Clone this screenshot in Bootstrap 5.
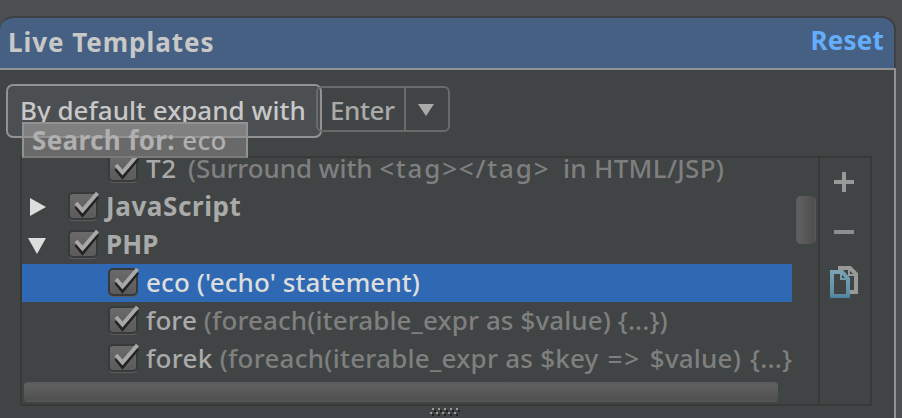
<!DOCTYPE html>
<html lang="en" data-bs-theme="dark">
<head>
<meta charset="utf-8">
<meta name="viewport" content="width=device-width, initial-scale=1">
<title>Live Templates</title>
<link href="https://cdn.jsdelivr.net/npm/bootstrap@5.3.0/dist/css/bootstrap.min.css" rel="stylesheet">
<style>
body{width:902px;height:418px;background:#4b4f51;font-family:"Noto Sans","Open Sans",sans-serif;font-size:26px;font-weight:500;line-height:36px;color:#aaa}
.settings{padding-top:16px;width:896px;height:418px}
.titlebar{height:52px;background:#466083;border:2px solid #3e4142;border-bottom:0;border-left:0;border-radius:14px 14px 0 0;color:#c8c8c8;padding:6px 10px 0 8px;letter-spacing:.95px}
.titlebar .btn{font-size:26px;line-height:32px;color:#64adfb;letter-spacing:.2px}
.pane{background:#404444;border-top:2px solid #929292;border-right:2px solid #929292}
.toolrow{height:72px;padding:14px 0 0 6px}
.hint{width:316px;height:54px;border:2px solid #929292;border-radius:7px;background:#4b4f51;color:#c8c8c8;padding:6px 0 0 12px;letter-spacing:0}
.combo{margin:2px 0 0 -6px;width:134px;height:46px;border:2px solid #6a6a6a;border-radius:6px;z-index:1}
.combo-value{width:88px;border-right:2px solid #6a6a6a;padding:4px 0 0 12px;letter-spacing:-.4px}
.finder{left:22px;top:122px;width:226px;height:36px;border:2px solid #929292;border-bottom-color:#7b7b7b;background:linear-gradient(#808080 0 12px,#929292 12px 14px,#696969 14px);color:#b0b0b0;z-index:3;line-height:33px;padding-left:8px;letter-spacing:.38px}
.list-box{margin:14px 0 0 20px;width:852px;height:250px;border:2px solid #383838}
.tree-view{width:796px;height:246px}
.tree{width:770px;height:224px}
.tree>.entry:first-child{margin-top:-8px}
.entry{height:38px}
.entry svg{flex:none}
.arrow{width:46px;height:38px}
.tick{width:38px;height:38px}
.leaf{padding-left:86px}
.chosen{background:#2f69b4;color:#ddd}
.note{color:#7f7f7f}
.hthumb{margin-left:2px;width:754px;height:20px;border-radius:4px;background:linear-gradient(#595959,#606060 12%,#505050 88%,#585858)}
.vthumb{left:774px;top:38px;width:20px;height:48px;border-radius:5px;background:linear-gradient(90deg,#595959,#606060 12%,#505050 88%,#585858)}
.actions{width:52px;border-left:2px solid #383838;padding:14px 0 0 8px}
.grip{margin:0 0 0 430px}
.ls-n{letter-spacing:-.1px}.ls-0{letter-spacing:.1px}.ls-k{letter-spacing:.25px}.ls-c{letter-spacing:.3px}.ls-d{letter-spacing:.6px}.ls-w{letter-spacing:1.8px}.ws{letter-spacing:.2px;word-spacing:2px}
</style>
</head>
<body class="overflow-hidden m-0">
<svg width="0" height="0" class="position-absolute">
<defs>
<linearGradient id="boxFill" x2="0" y2="1"><stop stop-color="#6b6b6b"/><stop offset="1" stop-color="#5a5a5a"/></linearGradient>
<linearGradient id="pageBlue" x2="0" y2="1"><stop stop-color="#7ba3b5"/><stop offset=".85" stop-color="#5f8ea5"/><stop offset="1" stop-color="#4581a0"/></linearGradient>
<symbol id="tick" viewBox="0 0 38 38">
<rect x="1" y="5" width="28" height="28" rx="4" fill="#5b5d5d"/>
<rect x="1" y="5" width="28" height="26" rx="4" fill="url(#boxFill)" stroke="#38393a" stroke-width="2"/>
<path d="M8 18.500L14.500 26.500L29.500 8.500" fill="none" stroke="#222" stroke-width="4"/>
<path d="M8 15L14.500 22.500L29.500 5" fill="none" stroke="#a8a8a8" stroke-width="4"/>
</symbol>
</defs>
</svg>
<main class="settings d-flex flex-column">
<header class="titlebar d-flex justify-content-between align-items-start flex-shrink-0">
<span class="fw-bold">Live Templates</span>
<button class="btn fw-bold border-0 p-0" type="button">Reset</button>
</header>
<section class="pane flex-grow-1">
<div class="toolrow d-flex">
<div class="hint text-nowrap">By default expand with</div>
<div class="combo d-flex"><div class="combo-value">Enter</div><svg width="42" height="42" viewBox="0 0 42 42"><path d="M12 16h16l-8 12z" fill="#aaa"/></svg></div>
</div>
<div class="finder position-absolute text-nowrap"><b>Search for:</b> eco</div>
<div class="list-box d-flex">
<div class="tree-view position-relative">
<div class="tree overflow-hidden text-nowrap">
<div class="entry leaf d-flex"><svg class="tick"><use href="#tick"/></svg><div><span class="ls-d">T2 </span><span class="note"><span class="ls-n ms-1">(Surround with </span><span class="ls-w">&lt;tag&gt;&lt;/tag&gt; </span><span class="ls-c ms-1">in HTML/JSP)</span></span></div></div>
<div class="entry d-flex"><svg class="arrow" viewBox="0 0 46 38"><path d="M8 10v18l16-9z" fill="#ddd"/></svg><svg class="tick"><use href="#tick"/></svg><b class="ls-d">JavaScript</b></div>
<div class="entry d-flex"><svg class="arrow" viewBox="0 0 46 38"><path d="M6 12h18l-9 16z" fill="#ddd"/></svg><svg class="tick"><use href="#tick"/></svg><b class="ls-0">PHP</b></div>
<div class="entry leaf chosen d-flex"><svg class="tick"><use href="#tick"/></svg><span class="ls-0">eco ('echo' statement)</span></div>
<div class="entry leaf d-flex"><svg class="tick"><use href="#tick"/></svg><div><span class="ls-0">fore </span><span class="note ls-0">(foreach(iterable_expr as $value) {...})</span></div></div>
<div class="entry leaf d-flex"><svg class="tick"><use href="#tick"/></svg><div><span class="ls-c">forek </span><span class="note"><span class="ls-k">(foreach(iterable_expr as </span><span class="ws">$key <span class="ls-w">=&gt;</span> $value) {...}</span></span></div></div>
</div>
<div class="hthumb"></div>
<div class="vthumb position-absolute"></div>
</div>
<div class="actions d-flex flex-column">
<svg width="32" height="132" viewBox="828 172 32 132">
<path d="M834 182h20M844 172v20" stroke="#999" stroke-width="4"/>
<path d="M834 232h20" stroke="#8e8e8e" stroke-width="4"/>
<path d="M838 268h12l6 6v18h-7" fill="none" stroke="#999" stroke-width="4"/>
<path d="M849 267v8h8" fill="none" stroke="#999" stroke-width="2"/>
<path fill-rule="evenodd" d="M830 270h13l7 8v20h-20zM834 274v20h12v-14h-6v-6z" fill="url(#pageBlue)"/>
<path d="M842 275v3h3z" fill="#404444"/>
</svg>
</div>
</div>
<svg class="grip d-block" width="32" height="12" viewBox="430 406 32 12" shape-rendering="crispEdges">
<g fill="#222"><path d="M434 410h2v2h-2zM440 410h2v2h-2zM446 410h2v2h-2zM452 410h2v2h-2zM458 410h2v2h-2zM432 414h2v2h-2zM438 414h2v2h-2zM444 414h2v2h-2zM450 414h2v2h-2zM456 414h2v2h-2z"/></g>
<g fill="#999"><path d="M432 408h2v2h-2zM438 408h2v2h-2zM444 408h2v2h-2zM450 408h2v2h-2zM456 408h2v2h-2zM430 412h2v2h-2zM436 412h2v2h-2zM442 412h2v2h-2zM448 412h2v2h-2zM454 412h2v2h-2z"/></g>
</svg>
</section>
</main>
<script src="https://cdn.jsdelivr.net/npm/bootstrap@5.3.0/dist/js/bootstrap.bundle.min.js"></script>
</body>
</html>
